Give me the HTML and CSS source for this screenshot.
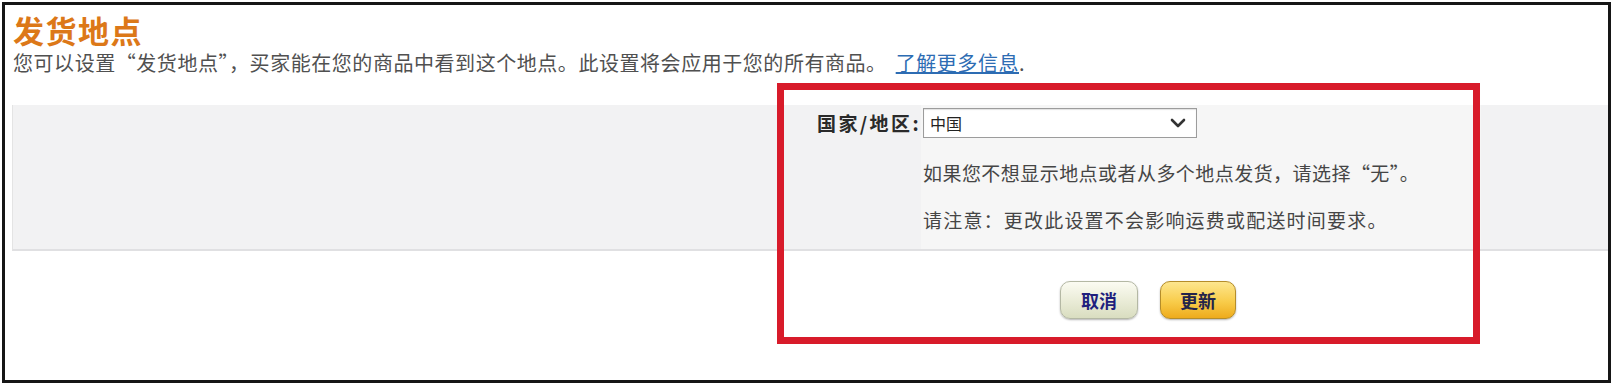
FILE: index.html
```html
<!DOCTYPE html>
<html lang="zh-CN">
<head>
<meta charset="utf-8">
<title>发货地点</title>
<link rel="stylesheet" href="styles.css">
</head>
<body>
<div class="frame">
  <header class="header">
    <h1 class="title">发货地点</h1>
    <p class="intro">您可以设置“发货地点”，买家能在您的商品中看到这个地点。此设置将会应用于您的所有商品。 <a class="link" href="#">了解更多信息</a>.</p>
  </header>
  <section class="band">
    <div class="band-spacer"></div>
    <div class="label">国家/地区:</div>
    <div class="fields">
      <div class="select">
        <span class="select-value">中国</span>
        <svg class="chevron" width="16" height="10" viewBox="0 0 16 10"><path d="M2 2 L8 8 L14 2" fill="none" stroke="#333" stroke-width="2.6" stroke-linecap="round" stroke-linejoin="round"/></svg>
      </div>
      <p class="note">如果您不想显示地点或者从多个地点发货，请选择“无”。</p>
      <p class="note note-wide">请注意：更改此设置不会影响运费或配送时间要求。</p>
    </div>
    <div class="band-rest"></div>
  </section>
  <div class="actions">
    <button class="btn btn-cancel" type="button">取消</button>
    <button class="btn btn-update" type="button">更新</button>
  </div>
  <div class="highlight"></div>
</div>
</body>
</html>
```

FILE: styles.css
```css
* { box-sizing: border-box; }
html, body { margin: 0; padding: 0; background: #fff; }
body {
  font-family: "Noto Sans CJK SC", "Noto Sans", "Liberation Sans", sans-serif;
  color: #444;
}
.frame {
  position: relative;
  margin: 2px 1px 0 2px;
  width: 1609px;
  height: 381px;
  border: 3px solid #161616;
  background: #fff;
}
.header { padding: 8px 0 0 8px; }
.title {
  margin: 0;
  font-size: 31px;
  line-height: 34px;
  font-weight: 700;
  letter-spacing: 1.5px;
  color: #dc7818;
}
.intro {
  margin: 4px 0 0 0;
  font-size: 20px;
  line-height: 23px;
  letter-spacing: 0.55px;
  color: #505050;
  white-space: nowrap;
}
.link { color: #2d6cb3; text-decoration: underline; margin-left: 4px; }
.band {
  margin: 31px 0 0 7px;
  display: grid;
  grid-template-columns: 802px 106px 560px 1fr;
  background: #f2f2f3;
  border-left: 1px solid #e4e4e4;
  border-bottom: 2px solid #e0e0e2;
  height: 146px;
}
.label {
  padding-top: 6px;
  font-size: 19px;
  line-height: 24px;
  font-weight: 700;
  letter-spacing: 2.4px;
  color: #2a2a2a;
  text-align: right;
  white-space: nowrap;
}
.fields {
  background: #f6f6f6;
  padding: 3px 0 0 2px;
}
.select {
  width: 274px;
  height: 30px;
  border: 1px solid #9c9c9c;
  box-shadow: inset 0 1px 1px rgba(0,0,0,0.12);
  background: #fff;
  display: flex;
  align-items: center;
  justify-content: space-between;
  padding: 0 10px 0 6px;
}
.select-value { font-size: 16px; color: #222; }
.chevron { display: block; }
.note {
  margin: 23px 0 0 0;
  font-size: 19px;
  line-height: 24px;
  letter-spacing: 0.45px;
  color: #454545;
  white-space: nowrap;
}
.note-wide { letter-spacing: 1.2px; }
.actions {
  display: flex;
  gap: 22px;
  padding-left: 1055px;
  margin-top: 30px;
}
.btn {
  height: 38px;
  border-radius: 10px;
  font-family: "Noto Sans CJK SC", "Noto Sans", sans-serif;
  font-size: 18px;
  font-weight: 700;
  line-height: 1;
  padding: 0;
  box-shadow: 0 1px 2px rgba(0,0,0,0.3);
}
.btn-cancel {
  width: 78px;
  color: #1f1f7e;
  border: 1px solid #b4b8a4;
  background: linear-gradient(#fbfbf2, #e9ebd6 55%, #d9ddc0);
}
.btn-update {
  width: 76px;
  color: #24244a;
  border: 1px solid #b58d2a;
  background: linear-gradient(#fde68e, #f8cc4a 55%, #eeab1c);
}
.highlight {
  position: absolute;
  left: 772px;
  top: 78px;
  width: 703px;
  height: 261px;
  border: 7px solid #d81b2a;
  pointer-events: none;
}
```
